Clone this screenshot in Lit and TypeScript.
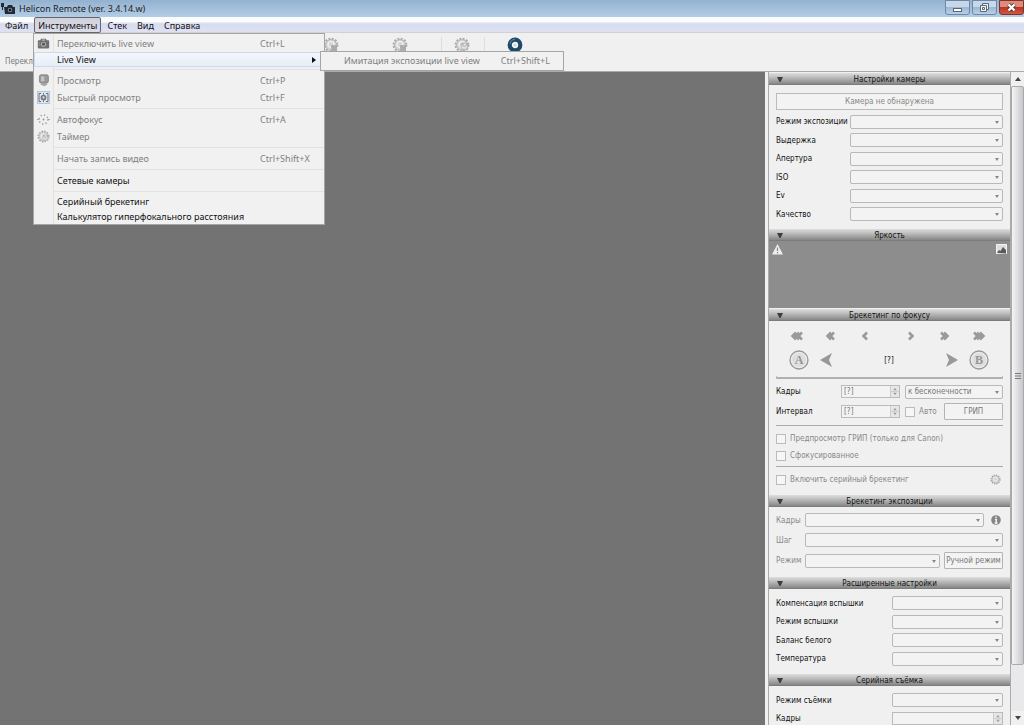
import { LitElement, html, css, svg, nothing } from "lit";
import { customElement, property } from "lit/decorators.js";

const GEAR = svg`<circle cx="8" cy="8" r="6.4" fill="none" stroke="currentColor" stroke-width="2" stroke-dasharray="1.900 1.450"/><circle cx="8" cy="8" r="5.400" fill="#d6d6d6" stroke="currentColor" stroke-width=".7"/><circle cx="8" cy="7.500" r="3" fill="none" stroke="#f2f2f2" stroke-width="1.200"/>`;

const ICONS: Record<string, unknown> = {
  camera: svg`<path d="M1 5q0-1 1-1h2l1-2h6l1 2h2q1 0 1 1v8q0 1-1 1H2q-1 0-1-1z" fill="#6f6f6f"/><path d="M6 3h4v1.500H6z" fill="#bbb"/><circle cx="8" cy="9" r="3.300" fill="#a8a8a8"/><circle cx="8" cy="9" r="1.800" fill="#555"/><path d="M2 6h2v5H2z" fill="#888"/>`,
  preview: svg`<rect x="3" y="1" width="11" height="10" rx="2" fill="#999" stroke="#808080"/><path d="M5 3h4v6H5z" fill="#c4c4c4"/><path d="M6 11h5l2 2-4 2-5-2z" fill="#a5a5a5"/>`,
  quick: svg`<path d="M.5.5h15v15H.5z" fill="#dce7f4" stroke="#a3b9d3"/><path d="M5 3H2.500v10H5M11 3h2.500v10H11" fill="none" stroke="#555"/><circle cx="8" cy="8" r="3.500" fill="#777"/><circle cx="8" cy="8" r="1.400" fill="#ddd"/><path d="M8 2.500v2M8 11.500v2" stroke="#555"/>`,
  focus: svg`<circle cx="8" cy="8" r="5.500" fill="none" stroke="#999" stroke-width="1.800" stroke-dasharray="1.500 2.820"/><circle cx="8" cy="8" r="1.200" fill="#999"/><path d="M0 8h3M13 8h3" stroke="#999"/>`,
  timer: svg`${GEAR}<path d="M8 6.500l2 3 3.500-2" fill="none" stroke="#8c8c8c" stroke-width="1.400"/><circle cx="10.500" cy="9.500" r="3.500" fill="#e4e4e4" fill-opacity=".6" stroke="#aaa" stroke-width=".8"/>`,
  snap: svg`${GEAR}<path d="M8 8h6v6H8z" fill="#b0b0b0"/><path d="M9 9l5 5M14 9l-5 5" stroke="#999" stroke-width=".6"/>`,
};

const icon = (name: string) => html`<svg width="16" height="16" viewBox="0 0 16 16" color="#a8a8a8">${ICONS[name]}</svg>`;

@customElement("panel-section")
export class PanelSection extends LitElement {
  @property() heading = "";
  static styles = css`
    :host { display: block; }
    button {
      display: grid; grid-template-columns: 21px 1fr 21px; align-items: center; box-sizing: border-box;
      width: 100%; height: 12px; padding: 1px 0 0; border: 0; border-bottom: 1px solid #7c7c7c;
      font: 8px/11px "DejaVu Sans Condensed", "DejaVu Sans", sans-serif; color: #111;
      background: linear-gradient(#dedede, #b8b8b8 45%, #868686);
    }
    svg { width: 6px; height: 5px; margin-left: 8px; display: block; }
  `;
  render() {
    return html`<button aria-expanded="true"><svg viewBox="0 0 6 5"><path d="M0 0h6L3.500 5h-1z" fill="#3c3c3c"/></svg><span>${this.heading}</span></button><slot></slot>`;
  }
}

@customElement("app-root")
export class AppRoot extends LitElement {
  static styles = css`
    :host {
      display: flex; flex-direction: column; height: 100vh; overflow: hidden; position: relative;
      background: #f0f0f0; color: #111; font: 9px/14px "Noto Sans", sans-serif;
    }
    * { box-sizing: border-box; }
    svg { display: block; }
    button, select, input, kbd { font: inherit; color: inherit; margin: 0; }
    .titlebar { display: flex; align-items: center; height: 17px; flex: none; padding: 0 0 0 1px; background: linear-gradient(#93b1d0, #b3cde6); }
    .titlebar h1 { flex: 1; margin: 0 0 0 4px; font-size: 9px; line-height: 16px; font-weight: 400; color: #222; }
    .wins { display: flex; gap: 2px; align-self: flex-start; }
    .wins button { width: 25px; height: 15px; padding: 0; border: 1px solid #6c87a5; border-radius: 0 0 3px 3px; background: linear-gradient(#c6d8ea 45%, #9fb8d2 50%, #b8cfe6); }
    .wins .close { border-color: #803328; background: linear-gradient(#dc8b7d 45%, #bb3421 50%, #cf5942); }
    .menubar { display: flex; gap: 2px; align-items: center; height: 16px; flex: none; padding-left: 1px; background: linear-gradient(#fbfcfe 30%, #d8dcf0 45%, #dfe1f2); border-bottom: 1px solid #cfd0d8; }
    .menubar button { height: 16px; padding: 1px 3px 0; border: 1px solid transparent; background: none; }
    .menubar .open { border-color: #666; border-radius: 2px; background: linear-gradient(#cfd1dd, #dbdce8); }
    .tools { height: 39px; flex: none; border-bottom: 1px solid #aaa; }
    .toolrow { display: flex; padding: 4px 0 0 323px; height: 22px; }
    .toolrow span { width: 69px; }
    .toolrow .snap { width: 49px; }
    .toolrow .clock { width: 43px; padding-left: 12px; border-left: 1px solid #ddd; }
    .toolrow .ring { border-left: 1px solid #ddd; padding-left: 22px; }
    .tools p { margin: 0 0 0 5px; font: 8px/14px "DejaVu Sans Condensed", "DejaVu Sans", sans-serif; color: #777; }
    .body { flex: 1; min-height: 0; display: flex; }
    .view { flex: 1; background: #737373; }
    .side { width: 259px; flex: none; display: flex; padding-left: 3px; }
    .panel { flex: 1; min-width: 0; overflow: hidden; border: 1px solid #aaa; border-width: 0 1px; font: 8px/11px "DejaVu Sans Condensed", "DejaVu Sans", sans-serif; padding-top: 1px; }
    .bar { width: 13px; display: flex; flex-direction: column; background: #e9e9ec; }
    .bar button { border: 0; padding: 0; height: 14px; background: #f0f0f0; display: grid; place-items: center; }
    .bar .thumb { flex: 1; display: grid; place-items: center; border: 1px solid #aaa; border-radius: 2px; background: linear-gradient(90deg, #f4f4f4, #e1e1e4 45%, #c8c8cc); }
    .bar .rest { height: 46px; }
    .pad { padding: 0 7px; }
    .gap { margin-top: 6px; }
    .tight { margin-top: 1px; }
    .cam { display: block; width: 100%; height: 17px; margin: 8px 0 2px; border: 1px solid #bbb; background: #f3f3f3; color: #888; padding: 0; }
    .row { display: grid; grid-template-columns: 74px 1fr; align-items: center; height: 19px; }
    .row:nth-child(odd) { height: 18px; }
    .adv { padding-top: 5px; }
    .adv .row { grid-template-columns: 116px 1fr; }
    .sel { position: relative; display: block; min-width: 0; }
    .sel select { display: block; appearance: none; width: 100%; height: 14px; border: 1px solid #b8b8b8; border-radius: 2px; background: #f3f3f3; padding: 0 0 0 2px; color: #777; opacity: 1; }
    .sel::after { content: ""; position: absolute; right: 4px; top: 6px; border: 2px solid transparent; border-top: 3px solid #888; border-bottom: 0; }
    .hist { height: 67px; background: #8d8d8d; display: flex; justify-content: space-between; padding: 3px; }
    .arrows { display: flex; justify-content: space-between; padding: 10px 14px 0 10px; }
    .arrows div { display: grid; grid-template-columns: repeat(3, 34px); justify-items: center; }
    .ab { display: grid; grid-template-columns: 20px 34px 1fr 34px 20px; align-items: center; justify-items: center; padding: 9px 21px 6px 20px; }
    .ab button, .arrows button, .cog { display: block; border: 0; padding: 0; background: none; }
    hr { height: 1px; margin: 0; border: 0; background: #aaa; }
    .slider { height: 3px; border: 1px solid #bbb; border-width: 0 1px; background: linear-gradient(#f0f0f0 1px, #b0b0b0 1px); }
    .form { display: grid; align-items: center; color: #777; }
    .focus { grid-template-columns: 60px 59px 34px 1fr; column-gap: 5px; grid-template-rows: 17px 17px; row-gap: 3px; padding: 4px 0 5px; }
    .focus .span { grid-column: 3 / -1; }
    .focus label { color: #111; }
    .focus .chk { color: #888; }
    .expo { grid-template-columns: 25px 135px 1fr 15px; column-gap: 4px; grid-template-rows: 18px 22px 19px; padding: 4px 0 1px; color: #888; }
    .expo .s2 { grid-column: 2 / 4; }
    .expo .s3 { grid-column: 2 / -1; }
    .expo .btn { grid-column: 3 / -1; }
    .expo svg { justify-self: center; }
    .spin { display: flex; height: 13px; border: 1px solid #bbb; background: #f3f3f3; }
    .spin input { flex: 1; min-width: 0; width: 0; border: 0; padding: 0 2px; background: none; color: #777; }
    .spin svg { width: 9px; height: 11px; border-left: 1px solid #ccc; background: #e6e6e6; }
    .chk { display: flex; align-items: center; gap: 4px; color: #888; height: 17px; }
    .chk input { appearance: none; width: 10px; height: 10px; border: 1px solid #bbb; background: #f6f6f6; }
    .checks { padding: 4px 0 2px; }
    .serial { display: flex; justify-content: space-between; align-items: center; padding: 4px 2px 1px 0; }
    .btn { height: 17px; padding: 0; border: 1px solid #b4b4b4; border-radius: 1px; background: #f3f3f3; color: #777; white-space: nowrap; }
    .menu { position: absolute; left: 33px; top: 33px; width: 292px; border: 1px solid #a5a5a5; background: linear-gradient(90deg, #f0f0f0 19px, #e2e2e2 19px, #e2e2e2 20px, #f1f1f1 20px); padding: 1px 0 0; }
    .menu button { display: grid; grid-template-columns: 18px 5px 203px 1fr; width: 100%; align-items: center; text-align: left; border: 0; padding: 0; background: none; height: 17px; white-space: nowrap; }
    .menu button span { grid-column: 3; }
    .menu button svg { grid-column: 1; grid-row: 1; width: 13px; height: 13px; justify-self: center; }
    .menu button:disabled, .sub button:disabled { color: #808080; }
    .menu .low { height: 15px; }
    .menu .hot { background: linear-gradient(#f5f8fc, #e5edf7); outline: 1px solid #cbdaec; outline-offset: -1px; }
    .menu .hot i { justify-self: end; margin-right: 8px; border: 3px solid transparent; border-left: 4px solid #111; border-right: 0; }
    .menu hr { margin: 2px 0 2px 20px; background: #e2e2e2; }
    .sub { position: absolute; left: 320px; top: 51px; width: 244px; border: 1px solid #a5a5a5; background: #f1f1f1; }
    .sub button { display: flex; width: 100%; height: 18px; border: 0; background: none; padding: 0 13px 0 23px; justify-content: space-between; align-items: center; white-space: nowrap; }
  `;

  private select(label: string, value = "", cls = "") {
    return html`<span class="sel ${cls}"><select disabled aria-label=${label}><option>${value}</option></select></span>`;
  }

  private row(label: string, id: string) {
    return html`<div class="row"><label for=${id}>${label}</label><span class="sel"><select id=${id} disabled></select></span></div>`;
  }

  private spin(id: string, value = "") {
    return html`<span class="spin"><input id=${id} .value=${value} disabled /><svg viewBox="0 0 9 11"><path d="M2.500 4l2-2.500 2 2.500zM2.500 7l2 2.500 2-2.500z" fill="#999"/><path d="M0 5.500h9" stroke="#ccc"/></svg></span>`;
  }

  private check(label: string) {
    return html`<label class="chk"><input type="checkbox" disabled />${label}</label>`;
  }

  private item(label: string, key = "", name = "") {
    return html`<button disabled role="menuitem">${name ? icon(name) : nothing}<span>${label}</span><kbd>${key}</kbd></button>`;
  }

  private chevrons(count: number, forward: boolean) {
    const w = 4 + count * 3;
    return html`<button disabled aria-label=${forward ? "Вперёд" : "Назад"}><svg width=${w} height="10" viewBox="0 0 ${w} 10"><g transform=${forward ? "" : `translate(${w} 0) scale(-1 1)`}>${Array.from({ length: count }, (_, i) => svg`<path d="M${i * 3 + 1} 1.500l3.500 3.500-3.500 3.500" fill="none" stroke="#999" stroke-width="2.500"/>`)}</g></svg></button>`;
  }

  private round(letter: string) {
    return html`<button disabled><svg width="20" height="20" viewBox="0 0 20 20"><circle cx="10" cy="10" r="9" fill="#dedede" stroke="#999" stroke-width="1.300"/><circle cx="10" cy="10" r="7.500" fill="none" stroke="#eee"/><text x="10" y="14" text-anchor="middle" font-family="Liberation Serif" font-weight="700" font-size="12" fill="#969696">${letter}</text></svg></button>`;
  }

  render() {
    return html`
      <header class="titlebar">
        <svg width="14" height="13" viewBox="0 0 14 13"><path d="M0 1h3v4H2v3H1V5H0zM3 5h3l1-2h4l1 2h2v7H4z" fill="#222b33"/><circle cx="9" cy="8" r="2.300" fill="#788796"/><circle cx="9" cy="8" r="1.200" fill="#111"/></svg>
        <h1>Helicon Remote (ver. 3.4.14.w)</h1>
        <div class="wins">
          <button aria-label="Свернуть"><svg width="23" height="13"><rect x="7.500" y="7.500" width="8" height="3" fill="#fff" stroke="#56687c"/></svg></button>
          <button aria-label="Восстановить"><svg width="23" height="13"><path d="M9.500 2.500h6v6h-6z" fill="#f4f4f4" stroke="#56687c"/><path d="M7.500 4.500h6v6h-6z" fill="#f4f4f4" stroke="#56687c"/><path d="M9.500 6.500h2v2h-2z" fill="none" stroke="#56687c"/></svg></button>
          <button class="close" aria-label="Закрыть"><svg width="23" height="13"><path d="M8.500 3.500l6 6m0-6l-6 6" stroke="#5d3832" stroke-width="4"/><path d="M8.500 3.500l6 6m0-6l-6 6" stroke="#fff" stroke-width="2.400"/></svg></button>
        </div>
      </header>
      <nav class="menubar"><button>Файл</button><button class="open">Инструменты</button><button>Стек</button><button>Вид</button><button>Справка</button></nav>
      <div class="tools">
        <div class="toolrow">
          <span>${icon("snap")}</span>
          <span class="snap">${icon("snap")}</span>
          <span class="clock">${icon("timer")}</span>
          <span class="ring"><svg width="16" height="16" viewBox="0 0 16 16"><circle cx="8" cy="8" r="5.300" fill="#f5f5f5" stroke="#1d4a68" stroke-width="4.200"/><path d="M3 7a5 5 0 0 1 5-4.500" fill="none" stroke="#5d8aa6"/><circle cx="8" cy="8" r="1.500" fill="#ccd6dd"/></svg></span>
        </div>
        <p>Переключить</p>
      </div>
      <div class="body">
        <main class="view"></main>
        <aside class="side">
          <div class="panel">
            <panel-section heading="Настройки камеры"><div class="pad">
              <button class="cam" disabled>Камера не обнаружена</button>
              ${["Режим экспозиции", "Выдержка", "Апертура", "ISO", "Ev", "Качество"].map((l, i) => this.row(l, `cam${i}`))}
            </div></panel-section>
            <panel-section class="gap" heading="Яркость"><div class="hist">
              <svg width="11" height="11" viewBox="0 0 11 11"><path d="M5.500 0L11 10.500H0z" fill="#eee"/><path d="M5.500 3.500v3.500M5.500 8v1.300" stroke="#888" stroke-width="1.200"/></svg>
              <svg width="11" height="11" viewBox="0 0 11 11"><path d="M.5.5h10v9H.5z" fill="#ddd" stroke="#f4f4f4"/><path d="M1 9l2-3 1.500 1L7 3l3 3v3.500z" fill="#5a5a5a"/></svg>
            </div></panel-section>
            <panel-section class="tight" heading="Брекетинг по фокусу">
              <div class="arrows"><div>${[3, 2, 1].map((n) => this.chevrons(n, false))}</div><div>${[1, 2, 3].map((n) => this.chevrons(n, true))}</div></div>
              <div class="ab">${this.round("A")}<button disabled aria-label="К точке A"><svg width="12" height="14"><path d="M12 0L0 7l12 7-3-7z" fill="#999"/></svg></button><span>[?]</span><button disabled aria-label="К точке B"><svg width="12" height="14"><path d="M0 0l12 7L0 14l3-7z" fill="#999"/></svg></button>${this.round("B")}</div>
              <div class="pad">
                <div class="slider"></div>
                <div class="form focus">
                  <label for="frames">Кадры</label>${this.spin("frames", "[?]")}${this.select("Направление", "к бесконечности", "span")}
                  <label for="step">Интервал</label>${this.spin("step", "[?]")}${this.check("Авто")}<button class="btn" disabled>ГРИП</button>
                </div>
                <hr />
                <div class="checks">${this.check("Предпросмотр ГРИП (только для Canon)")}${this.check("Сфокусированное")}</div>
                <hr />
                <div class="serial">${this.check("Включить серийный брекетинг")}<button class="cog" disabled aria-label="Настройки"><svg width="11" height="11" viewBox="0 0 16 16" color="#a0a0a0">${GEAR}</svg></button></div>
              </div>
            </panel-section>
            <panel-section class="gap" heading="Брекетинг экспозиции"><div class="pad"><div class="form expo">
              <label for="ef">Кадры</label><span class="sel s2"><select id="ef" disabled></select></span>
              <svg width="10" height="10" viewBox="0 0 10 10"><circle cx="5" cy="5" r="4.800" fill="#858585"/><path d="M5 1.500v1.600M4 4.500h1.200V8M3.700 8h2.800" fill="none" stroke="#fff" stroke-width="1.300"/></svg>
              <label for="es">Шаг</label><span class="sel s3"><select id="es" disabled></select></span>
              <label for="em">Режим</label><span class="sel"><select id="em" disabled></select></span><button class="btn" disabled>Ручной режим</button>
            </div></div></panel-section>
            <panel-section class="gap" heading="Расширенные настройки"><div class="pad adv">
              ${["Компенсация вспышки", "Режим вспышки", "Баланс белого", "Температура"].map((l, i) => this.row(l, `adv${i}`))}
            </div></panel-section>
            <panel-section class="gap" heading="Серийная съёмка"><div class="pad adv">
              ${this.row("Режим съёмки", "drive")}
              <div class="row"><label for="shots">Кадры</label>${this.spin("shots")}</div>
            </div></panel-section>
          </div>
          <div class="bar">
            <button aria-label="Вверх"><svg width="6" height="4"><path d="M3 0l3 4H0z" fill="#444"/></svg></button>
            <div class="thumb"><svg width="6" height="6"><path d="M0 .5h6M0 3h6M0 5.500h6" stroke="#777"/></svg></div>
            <div class="rest"></div>
            <button aria-label="Вниз"><svg width="6" height="4"><path d="M0 0h6L3 4z" fill="#444"/></svg></button>
          </div>
        </aside>
      </div>
      <div class="menu" role="menu">
        ${this.item("Переключить live view", "Ctrl+L", "camera")}
        <button class="low hot" role="menuitem"><span>Live View</span><i></i></button>
        <hr />
        ${this.item("Просмотр", "Ctrl+P", "preview")}
        ${this.item("Быстрый просмотр", "Ctrl+F", "quick")}
        <hr />
        ${this.item("Автофокус", "Ctrl+A", "focus")}
        ${this.item("Таймер", "", "timer")}
        <hr />
        ${this.item("Начать запись видео", "Ctrl+Shift+X")}
        <hr />
        <button role="menuitem"><span>Сетевые камеры</span></button>
        <hr />
        <button class="low" role="menuitem"><span>Серийный брекетинг</span></button>
        <button class="low" role="menuitem"><span>Калькулятор гиперфокального расстояния</span></button>
      </div>
      <div class="sub" role="menu"><button disabled role="menuitem"><span>Имитация экспозиции live view</span><kbd>Ctrl+Shift+L</kbd></button></div>
    `;
  }
}
